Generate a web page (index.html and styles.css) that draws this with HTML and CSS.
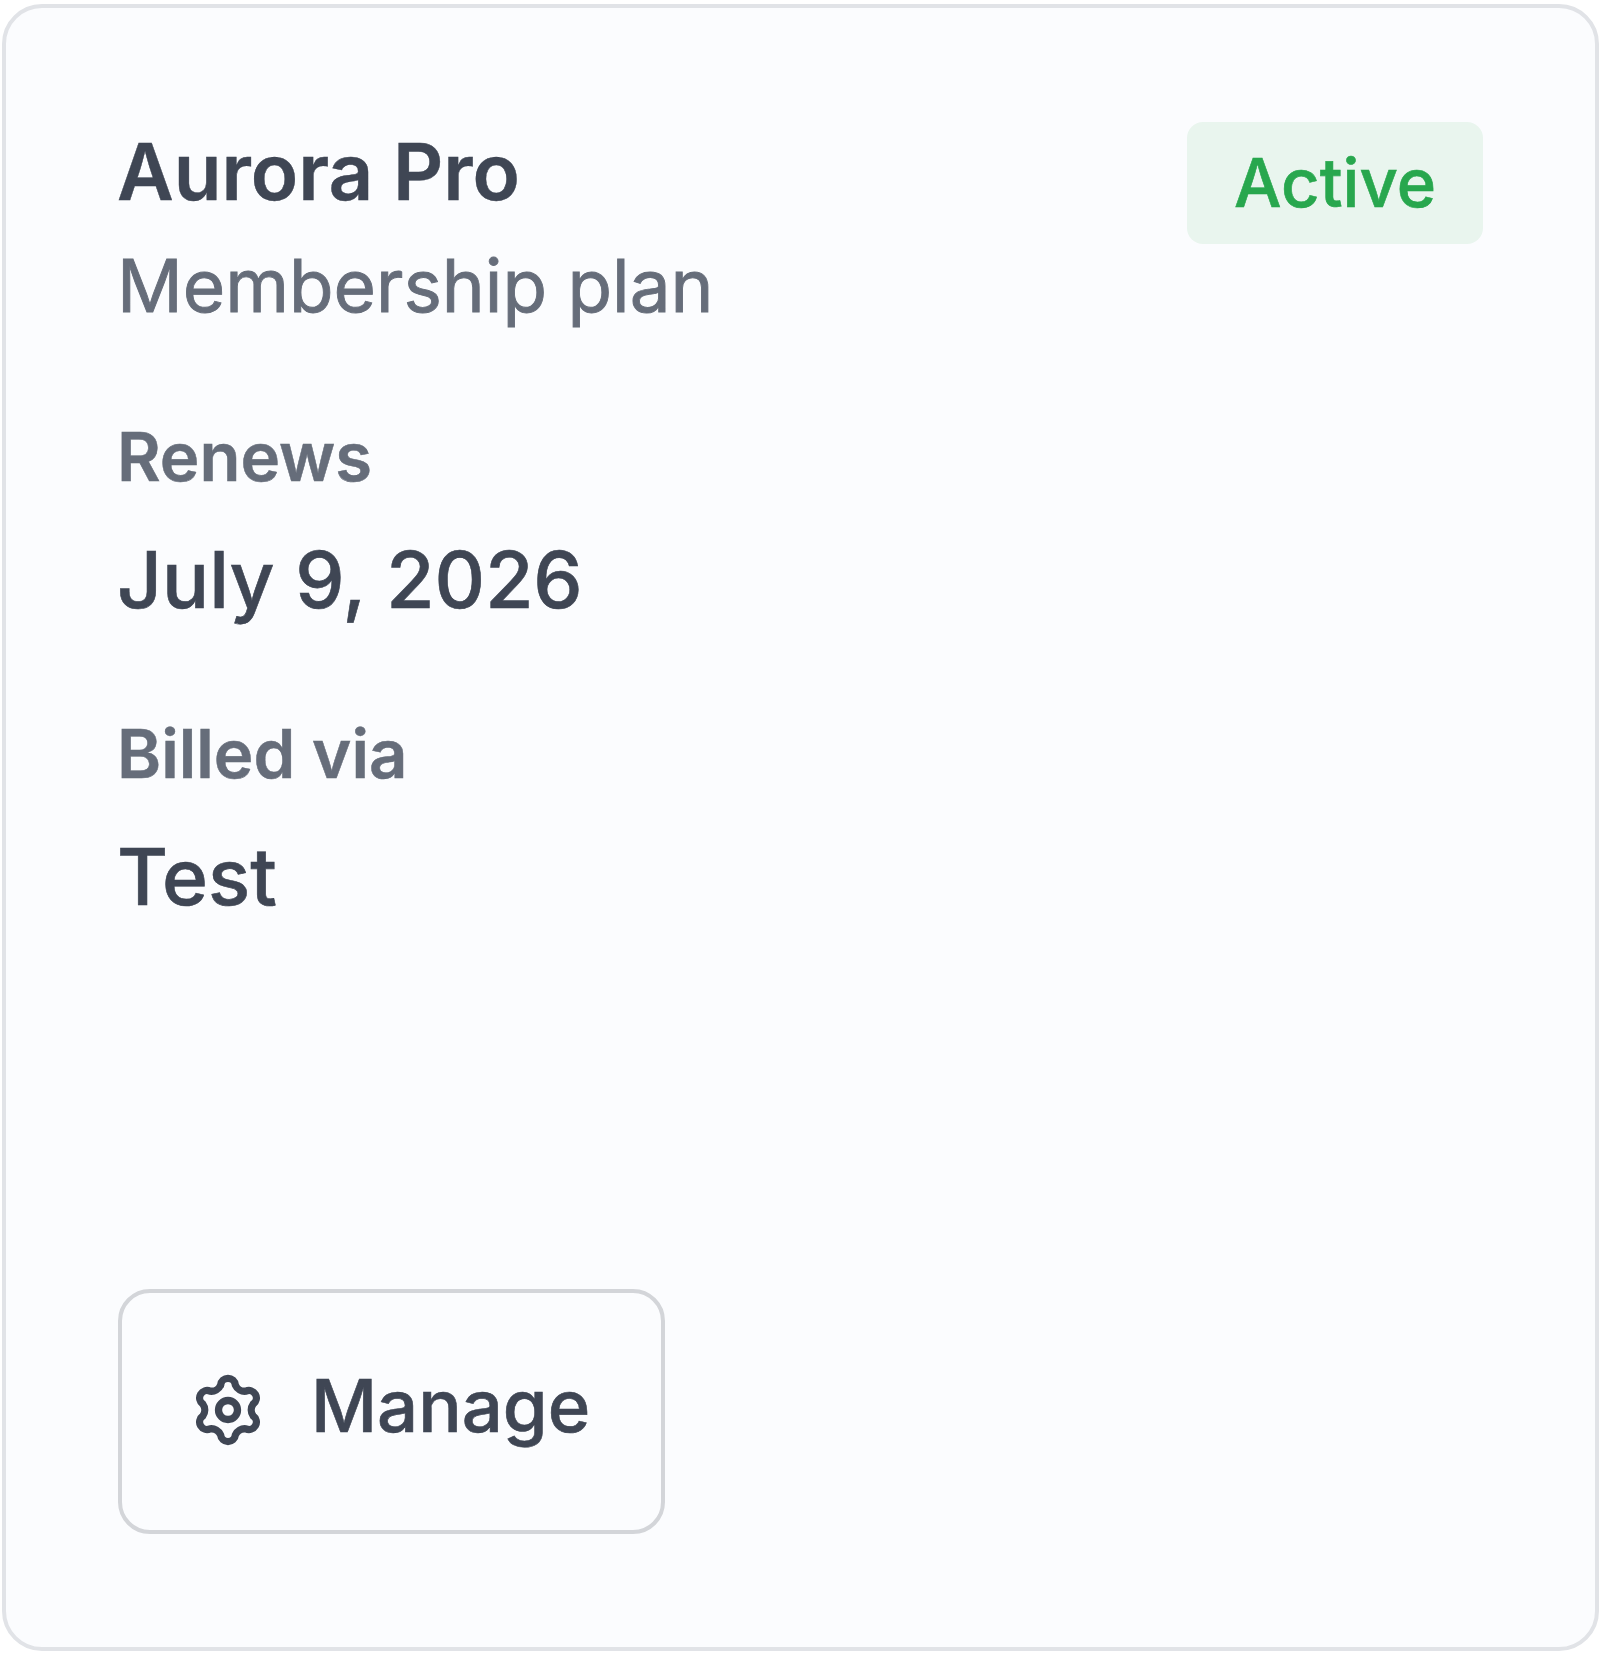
FILE: index.html
```html
<!DOCTYPE html>
<html lang="en">
<head>
<meta charset="utf-8">
<title>Aurora Pro</title>
<link rel="stylesheet" href="styles.css">
</head>
<body>
<main class="card">
  <header class="card-head">
    <div class="plan">
      <h1 class="plan-name">Aurora Pro</h1>
      <p class="plan-type">Membership plan</p>
    </div>
    <span class="badge">Active</span>
  </header>
  <dl class="details">
    <div class="detail">
      <dt class="detail-label">Renews</dt>
      <dd class="detail-value">July 9, 2026</dd>
    </div>
    <div class="detail">
      <dt class="detail-label">Billed via</dt>
      <dd class="detail-value">Test</dd>
    </div>
  </dl>
  <button class="manage" type="button">
    <svg class="manage-icon" viewBox="0 0 24 24" fill="none" stroke="currentColor" stroke-width="2.3" stroke-linecap="round" stroke-linejoin="round" aria-hidden="true">
      <path d="M9.671 4.136a2.34 2.34 0 0 1 4.659 0 3.2 3.2 0 0 0 3.319 1.915 2.34 2.34 0 0 1 2.33 4.033 3.2 3.2 0 0 0 0 3.831 2.34 2.34 0 0 1-2.33 4.033 3.2 3.2 0 0 0-3.319 1.915 2.34 2.34 0 0 1-4.659 0 3.2 3.2 0 0 0-3.32-1.915 2.34 2.34 0 0 1-2.33-4.033 3.2 3.2 0 0 0 0-3.831A2.34 2.34 0 0 1 6.35 6.051a3.2 3.2 0 0 0 3.319-1.915"/>
      <circle cx="12" cy="12" r="3"/>
    </svg>
    <span class="manage-label">Manage</span>
  </button>
</main>
</body>
</html>
```
FILE: styles.css
```css
* { box-sizing: border-box; }
html, body { margin: 0; height: 100%; background: #fff; }
body {
  padding: 4px 1px 5px 2px;
  font-family: Inter, "Liberation Sans", sans-serif;
  color: #3f4654;
}
.card {
  height: 100%;
  display: flex;
  flex-direction: column;
  align-items: flex-start;
  padding: 111px 112px 113px 111px;
  background: #fbfcfe;
  border: 4px solid #e1e3e7;
  border-radius: 40px;
  filter: blur(0.7px);
}
.card-head {
  width: 100%;
  display: flex;
  justify-content: space-between;
  align-items: flex-start;
}
.plan-name {
  margin: 0;
  font-size: 78px;
  line-height: 106px;
  font-weight: 600;
  -webkit-text-stroke: 0.4px currentColor;
}
.plan-type {
  margin: 12px 0 0;
  font-size: 72.8px;
  line-height: 98px;
  font-weight: 400;
  color: #666d7a;
  -webkit-text-stroke: 0.9px currentColor;
}
.badge {
  margin-top: 3px;
  padding: 20px 47px;
  font-size: 67px;
  line-height: 82px;
  font-weight: 500;
  color: #28a74e;
  background: #e9f5ee;
  border-radius: 16px;
  -webkit-text-stroke: 0.6px currentColor;
}
.details { margin: 77px 0 0; display: flex; flex-direction: column; gap: 74px; }
.detail-label {
  font-size: 67px;
  line-height: 90px;
  font-weight: 600;
  color: #666d7a;
  -webkit-text-stroke: 0.5px currentColor;
}
.detail-value {
  margin: 23px 0 0;
  font-size: 78.3px;
  line-height: 110px;
  font-weight: 500;
  -webkit-text-stroke: 0.6px currentColor;
}
.manage {
  margin-top: auto;
  margin-left: 1px;
  width: 547px;
  height: 245px;
  display: flex;
  align-items: center;
  gap: 45px;
  padding: 0 68px 4px;
  font: 500 72.4px/1 Inter, "Liberation Sans", sans-serif;
  color: #3f4654;
  background: transparent;
  border: 4px solid #d3d5d9;
  border-radius: 32px;
}
.manage-label { margin-bottom: 6px; -webkit-text-stroke: 0.6px currentColor; }
.manage-icon { width: 76px; height: 76px; flex: none; }
```
